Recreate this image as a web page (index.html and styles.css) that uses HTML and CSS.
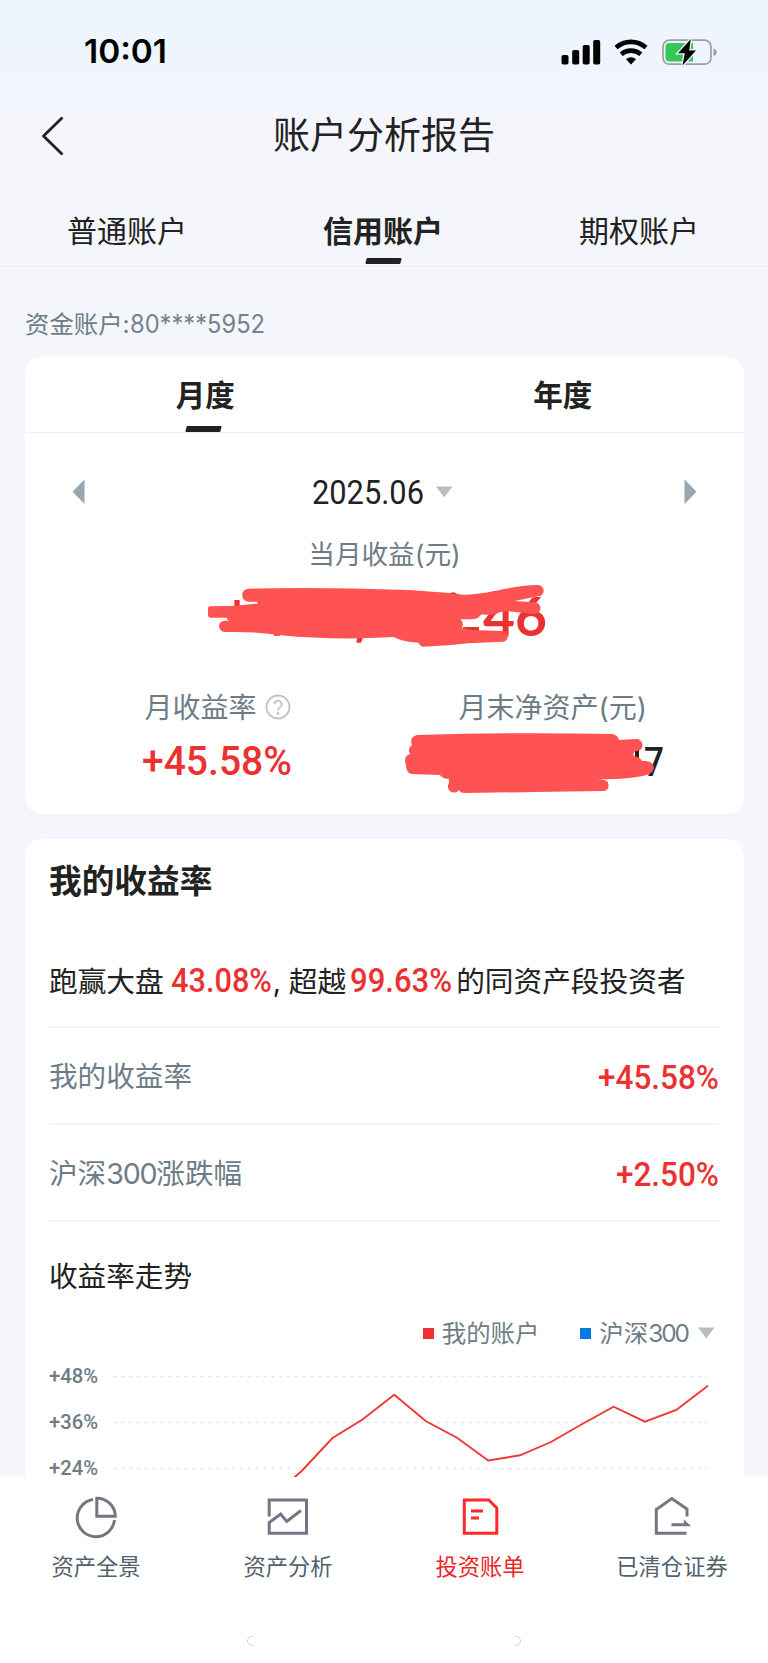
FILE: index.html
```html
<!DOCTYPE html>
<html lang="zh-CN">
<head>
<meta charset="utf-8">
<title>账户分析报告</title>
<link rel="stylesheet" href="styles.css">
</head>
<body>
<div class="screen">
  <main class="content">
    <div class="status">
      <svg class="clock" width="84" height="28"><text x="0" y="25" textLength="83" lengthAdjust="spacingAndGlyphs">10:01</text></svg>
      <svg class="status-icons" width="158" height="30" viewBox="0 0 158 30">
        <rect x="0.5" y="16" width="7" height="9.5" rx="1.8"/>
        <rect x="11.2" y="11" width="7" height="14.5" rx="1.8"/>
        <rect x="21.7" y="6" width="7" height="19.500" rx="1.8"/>
        <rect x="32.2" y="1" width="7" height="24.500" rx="1.8"/>
        <path class="wifi" d="M55 8.6C63.800 1 76.200 1 85 8.600M60.200 15.200C66 10.400 74 10.400 79.800 15.200"/>
        <path d="M70 25.500l-5-5.300c2.700-2.700 7.300-2.700 10 0z"/>
        <rect class="battery" x="102" y="1.200" width="48" height="24" rx="6.500"/>
        <path class="battery-tip" d="M152.500 9.500c2.600.8 3.200 2.200 3.200 3.700s-.6 2.900-3.200 3.700z"/>
        <path class="charge" d="M108.500 4H132v18.400h-23.500a4 4 0 0 1-4-4V8a4 4 0 0 1 4-4z"/>
        <path class="bolt" d="M129.800 0L117 14.300h6.800L121.500 26.500 135 11.600h-6.800z"/>
      </svg>
    </div>
    <header class="header">
      <svg class="back" width="26" height="42" viewBox="0 0 26 42"><path d="M22.500 2.500L3.500 21l19 18.500"/></svg>
      <h1>账户分析报告</h1>
    </header>
    <nav class="tabs">
      <span>普通账户</span>
      <span class="active">信用账户</span>
      <span>期权账户</span>
    </nav>
    <div class="account"><span>资金账户:</span><svg width="135" height="24"><text x="0" y="20" textLength="135" lengthAdjust="spacingAndGlyphs">80****5952</text></svg></div>

    <section class="card summary">
      <div class="period-tabs"><span class="active month">月度</span><span class="year">年度</span></div>
      <div class="date-row">
        <svg width="13" height="26"><path d="M12.500 .5v24.500L.5 12.800z"/></svg>
        <div class="date"><svg class="din" width="112" height="28"><text x="0" y="25" textLength="112" lengthAdjust="spacingAndGlyphs">2025.06</text></svg><svg class="caret" width="17" height="12"><path d="M0 .5h16.500L8.250 11.500z"/></svg></div>
        <svg width="13" height="26"><path d="M.5 .5v24.500l12-12.200z"/></svg>
      </div>
      <div class="label">当月收益<span>(元)</span></div>
      <svg class="income" width="345" height="70" viewBox="0 0 1035 210">
        <text class="big" x="825" y="153" textLength="192" lengthAdjust="spacingAndGlyphs">46</text>
        <path class="mark" d="M79 45h16v30H79zM448 155h18l-7 18h-14zM717 32q18-20 36 0zM198 146h18v6h-18zM765 126h48v14h-48z"/>
        <path class="scrawl" d="M122 11Q330 5 600 15C690 21 740 25 765 29C840 30 910 0 990 0A17 17 0 0 1 990 34L920 48L980 52A16 16 0 0 1 980 87L900 79L875 82Q860 93 820 88Q812 103 790 103L757 103Q770 113 761 130L778 130L775 134L812 136L890 138A17 17 0 0 1 885 170L780 175L730 180L646 185Q634 182 632 173Q580 170 558 156Q380 167 220 151Q150 139 50 141A17 17 0 0 1 50 107L63 107Q55 102 57 98L7 98Q0 97 0 89V71Q0 64 8 64L80 62L148 56V50L122 50A19 19 0 0 1 122 11Z"/>
      </svg>
      <div class="metrics">
        <div class="metric left">
          <div class="metric-label">月收益率<svg class="help" width="26" height="26" viewBox="0 0 26 26"><circle cx="13" cy="13" r="11.500"/><path d="M9.300 10.300a3.700 3.700 0 1 1 5.700 3.100c-1.500 1-2 1.600-2 3"/><circle class="dot" cx="13" cy="19.400" r="1.300"/></svg></div>
          <svg class="din rate" width="149" height="34"><text x="0" y="31" textLength="150" lengthAdjust="spacingAndGlyphs">+45.58%</text></svg>
        </div>
        <div class="metric right">
          <div class="metric-label">月末净资产(元)</div>
          <svg class="asset" width="262" height="62" viewBox="0 0 262 62">
            <text x="239" y="42.500" textLength="20" lengthAdjust="spacingAndGlyphs">7</text>
            <path class="black" d="M230 16h4v12h-4z"/>
            <path class="scrawl" d="M12 2Q110-1 207 1Q213 2 214 7L231 6A5.600 5.600 0 0 1 232 18Q227 19 229 23Q235 24 237 28Q248 27 249 35Q248 41 238 43Q214 47 192 46L199 47A5.600 5.600 0 0 1 199 58L130 59L60 60Q55 60 54 57A6 6 0 0 1 44 50L44 46Q38 46 35 42L6 41Q1 39 1 32Q-2 23 5 21Q2 15 7 12Q4 4 12 2Z"/>
          </svg>
        </div>
      </div>
    </section>

    <section class="card returns">
      <h2>我的收益率</h2>
      <div class="headline"><span class="a">跑赢大盘</span><svg class="din n1" width="102" height="28"><text x="0" y="26" textLength="101" lengthAdjust="spacingAndGlyphs">43.08%</text></svg><span class="comma">,</span><span class="b">超越</span><svg class="din n2" width="102" height="28"><text x="0" y="26" textLength="102" lengthAdjust="spacingAndGlyphs">99.63%</text></svg><span class="c">的同资产段投资者</span></div>
      <div class="row"><span>我的收益率</span><svg class="din" width="120" height="28"><text x="-1" y="26" textLength="121" lengthAdjust="spacingAndGlyphs">+45.58%</text></svg></div>
      <div class="row"><span>沪深<b class="latin">300</b>涨跌幅</span><svg class="din" width="102" height="28"><text x="-1" y="26" textLength="103" lengthAdjust="spacingAndGlyphs">+2.50%</text></svg></div>
      <h3>收益率走势</h3>
      <div class="legend">
        <i class="red"></i><span class="mine">我的账户</span><i class="blue"></i><span>沪深<b class="latin small">300</b></span><svg class="caret" width="17" height="12"><path d="M0 .5h16.500L8.250 11.500z"/></svg>
      </div>
      <svg class="chart" width="670" height="126" viewBox="49 1351 670 126">
        <g class="axis">
          <text x="49" y="1383" textLength="49" lengthAdjust="spacingAndGlyphs">+48%</text>
          <text x="49" y="1429" textLength="49" lengthAdjust="spacingAndGlyphs">+36%</text>
          <text x="49" y="1475" textLength="49" lengthAdjust="spacingAndGlyphs">+24%</text>
        </g>
        <path class="grid" d="M113 1376.500H707M113 1422.500H707M113 1468.500H707"/>
        <polyline class="line" points="294.300,1477.500 301.700,1471 332.500,1438 362.500,1419.500 394.200,1394.700 426,1421.300 457,1437.700 488.200,1460.500 520,1455.300 551,1442 582.700,1423.700 613.600,1406.700 645,1421.700 676.300,1410 708,1385.700"/>
      </svg>
    </section>
  </main>

  <footer class="bottom">
    <nav class="tabbar">
      <div class="item"><svg width="44" height="44" viewBox="0 0 44 44"><path d="M19 4.500A18.700 18.700 0 1 0 40.500 25M22.800 3.200v18.100h18.500A18.300 18.300 0 0 0 22.800 3.200z"/></svg><span>资产全景</span></div>
      <div class="item"><svg width="44" height="44" viewBox="0 0 44 44"><path d="M3.200 21.500V5H40.500v33.200H3.200V27.600l11.500-8.500 6 7.400L35 15.500"/></svg><span>资产分析</span></div>
      <div class="item on"><svg width="44" height="44" viewBox="0 0 44 44"><path d="M6.300 5h24.500l8 8v25.200H6.300zM13 16h12M13 23h8"/></svg><span>投资账单</span></div>
      <div class="item"><svg width="44" height="44" viewBox="0 0 44 44"><path d="M37 21.500V14L21.800 3.500 6.300 14.500v23.700H36.500"/><path class="arrow" d="M21.500 28.300h12.300v-3.700l7.500 6.700H21.500z"/></svg><span>已清仓证券</span></div>
    </nav>
    <div class="home"></div>
  </footer>
</div>
</body>
</html>
```

FILE: styles.css
```css
* { box-sizing: border-box; }
body { margin: 0; font-family: Inter, "Noto Sans CJK SC", sans-serif; color: #222; }
svg { display: block; flex: none; overflow: visible; }
h1, h2, h3 { margin: 0; }
.screen { width: 768px; height: 1663px; background: #fff; overflow: hidden; }
.content { height: 1477px; overflow: hidden; background: linear-gradient(#eef5ff 0, #f0f5fd 60px, #f4f6fb 130px, #f4f6fb 100%); }

.status { height: 96px; padding: 38px 49px 0 84px; display: flex; justify-content: space-between; }
.clock text { font: 600 33px Inter, sans-serif; fill: #000; }
.status-icons { margin-top: .5px; }
.wifi { fill: none; stroke: #000; stroke-width: 4.6; }
.battery { fill: none; stroke: #9a9ea5; stroke-width: 1.7; }
.battery-tip { fill: #9a9ea5; }
.charge { fill: #34c759; }
.bolt { fill: #000; stroke: #f0f5fd; stroke-width: 2.6; paint-order: stroke; }

.header { height: 80px; padding: 0 40px; display: grid; grid-template-columns: 26px 1fr 26px; align-items: center; }
.back path { fill: none; stroke: #222; stroke-width: 2.8; stroke-linejoin: round; }
.header h1 { font-size: 37px; line-height: 50px; font-weight: 400; text-align: center; }

.tabs { height: 91px; display: grid; grid-template-columns: repeat(3, 256px); border-bottom: 1px solid #e9ebef; }
.tabs span { font-size: 30px; line-height: 44px; padding-top: 33px; text-align: center; position: relative; left: -1px; }
.tabs .active, .period-tabs span { font-weight: 700; }
.active::after { content: ""; position: absolute; left: 50%; bottom: 2px; width: 35px; height: 6px; margin-left: -17px; background: #222; border-radius: 1px; transform: skewX(-14deg); }

.account { height: 90px; padding: 42px 25px 0; display: flex; font-size: 24.400px; line-height: 30px; color: #6e7c88; }
.account svg { margin-top: 4px; }
.account text { font: 400 25px Inter, sans-serif; fill: #75828e; }

.card { width: 719px; margin-left: 24.500px; background: #fff; border-radius: 17px; }
.summary { height: 457px; }
.period-tabs { height: 76px; display: grid; grid-template-columns: 1fr 1fr; border-bottom: 1px solid #eff0f3; }
.period-tabs span { font-size: 29.500px; line-height: 44px; padding-top: 16px; text-align: center; position: relative; }
.period-tabs .active::after { bottom: 0; margin-left: -18px; }
.month { padding-left: 2px; }
.year { padding-right: 2px; }
.date-row { height: 96px; padding: 46px 47px 0 47px; display: flex; justify-content: space-between; }
.date-row > svg { fill: #9ba5ae; }
.date { display: flex; margin-right: 4px; }
.din text { font: 500 33px Roboto, sans-serif; fill: #eb3131; }
.date .din text { font-weight: 400; fill: #222; }
.caret { fill: #b6bec4; }
.date .caret { margin: 7px 0 0 12px; }
.label, .metric-label { font-size: 28px; line-height: 40px; color: #6e7c88; }
.label { font-size: 26.600px; text-align: center; padding: 5px 0 1px 1px; }
.income { margin: 10px 0 0 183.500px; }
.big { font: 700 162px Lato, sans-serif; fill: #eb3131; }
.mark { fill: #eb3131; }
.scrawl { fill: #ff5252; }
.metrics { display: flex; margin-top: 33px; }
.metric { height: 110px; }
.left { width: 380px; padding-left: 120px; }
.left .metric-label { display: flex; align-items: center; }
.help { margin: -2px 0 0 8px; fill: none; stroke: #bcc4cb; stroke-width: 1.8; }
.help .dot { fill: #bcc4cb; stroke: none; }
.rate { margin: 16px 0 0 -3px; }
.rate text { font-size: 41px; }
.right .metric-label { padding-left: 54px; }
.asset { margin-top: 5px; }
.asset text { font: 500 40px Roboto, sans-serif; fill: #222; }
.black { fill: #222; }

.returns { height: 660px; margin-top: 25px; padding: 0 25px 0 24.500px; }
.returns h2 { height: 110px; padding-top: 20px; font-size: 32.700px; line-height: 44px; }
.headline { display: flex; align-items: flex-end; height: 79px; font-size: 28.700px; line-height: 40px; border-bottom: 2px solid #f3f4f5; padding-bottom: 12.500px; }
.headline .din { margin-bottom: 19.500px; }
.headline span { height: 40px; margin-bottom: 12px; white-space: nowrap; }
.headline .n1 { margin-left: 7px; }
.comma { width: 16px; }
.headline .n2 { margin-left: 4px; margin-right: 4px; }
.row { height: 97px; padding-top: 3px; display: flex; align-items: center; justify-content: space-between; border-bottom: 2px solid #f3f4f5; font-size: 28.600px; line-height: 40px; color: #6e7c88; }
.latin { font-weight: 400; letter-spacing: -1.200px; }
.small { letter-spacing: -2px; }
.returns h3 { padding-top: 35px; font-size: 28.600px; line-height: 40px; font-weight: 400; }
.legend { display: flex; align-items: center; justify-content: flex-end; height: 36px; margin-top: 18px; padding-right: 3.500px; font-size: 24.400px; line-height: 36px; color: #6e7c88; }
.legend i { width: 11px; height: 11px; margin-right: 8px; }
.red { background: #eb3131; }
.blue { background: #0878e3; }
.mine { margin-right: 41px; }
.legend .caret { margin-left: 10px; }
.axis text { font: 500 20px Roboto, sans-serif; fill: #6e7c88; }
.grid { stroke: #e8e8e9; stroke-width: 1.7; stroke-dasharray: 4 3.900; }
.line { fill: none; stroke: #f03636; stroke-width: 1.900; }

.bottom { height: 186px; background: #fff; }
.tabbar { display: grid; grid-template-columns: repeat(4, 192px); height: 158px; padding-top: 17.500px; }
.item { display: flex; flex-direction: column; align-items: center; font-size: 22.300px; line-height: 32px; color: #52616e; }
.item svg { fill: none; stroke: #747783; stroke-width: 3; }
.item .arrow { fill: #747783; stroke: none; }
.item span { margin-top: 12.500px; }
.on { color: #ec2525; }
.on svg { stroke: #ff2828; }
.home { width: 274px; height: 10px; margin: 1px auto 0; border: 1px solid #c8c8c8; border-radius: 5px; -webkit-mask-image: linear-gradient(90deg, #000 0, #000 4px, transparent 8px, transparent 266px, #000 270px); mask-image: linear-gradient(90deg, #000 0, #000 4px, transparent 8px, transparent 266px, #000 270px); }
```
